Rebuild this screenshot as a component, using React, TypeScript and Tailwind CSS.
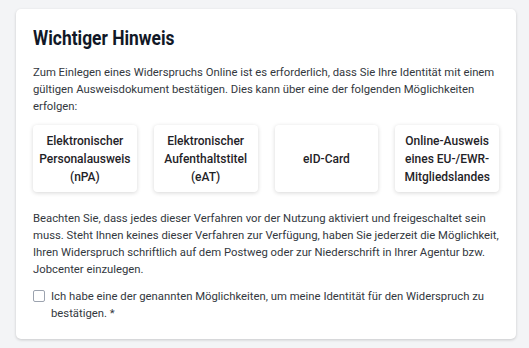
import React from "react";

const options = [
  ["Elektronischer", "Personalausweis", "(nPA)"],
  ["Elektronischer", "Aufenthaltstitel", "(eAT)"],
  ["eID-Card"],
  ["Online-Ausweis", "eines EU-/EWR-", "Mitgliedslandes"],
];

export default function App() {
  return (
    <div
      className="w-[529px] h-[348px] bg-[#f3f4f6] pt-[9px] pl-[16px] overflow-hidden"
      style={{ fontFamily: "Roboto, 'Liberation Sans', sans-serif" }}
    >
      <div className="w-[500px] bg-white rounded-[5px] shadow-[0_1px_3px_rgba(0,0,0,0.18)] p-[17px]">
        <h1 className="text-[20px] leading-[24px] font-bold text-[#111827] inline-block origin-left scale-x-[0.87] whitespace-nowrap">
          Wichtiger Hinweis
        </h1>
        <p className="mt-[12px] text-[11.3px] leading-[17px] text-[#333840] whitespace-nowrap">
          Zum Einlegen eines Widerspruchs Online ist es erforderlich, dass Sie Ihre Identität mit einem
          <br />
          gültigen Ausweisdokument bestätigen. Dies kann über eine der folgenden Möglichkeiten
          <br />
          erfolgen:
        </p>
        <div className="mt-[10px] grid grid-cols-4 gap-[17px]">
          {options.map((lines, i) => (
            <div
              key={i}
              className="h-[67px] rounded-[4px] bg-white shadow-[0_1px_4px_rgba(0,0,0,0.16)] flex flex-col items-center justify-center text-center text-[12px] leading-[18px] font-medium text-[#1f2328]"
            >
              {lines.map((l, j) => (
                <span key={j}>{l}</span>
              ))}
            </div>
          ))}
        </div>
        <p className="mt-[18px] text-[11.3px] leading-[17px] text-[#333840] whitespace-nowrap">
          Beachten Sie, dass jedes dieser Verfahren vor der Nutzung aktiviert und freigeschaltet sein
          <br />
          muss. Steht Ihnen keines dieser Verfahren zur Verfügung, haben Sie jederzeit die Möglichkeit,
          <br />
          Ihren Widerspruch schriftlich auf dem Postweg oder zur Niederschrift in Ihrer Agentur bzw.
          <br />
          Jobcenter einzulegen.
        </p>
        <label className="mt-[10px] flex items-start gap-[6px] text-[11.3px] leading-[17px] text-[#333840] whitespace-nowrap">
          <span className="mt-[2px] w-[12px] h-[12px] shrink-0 rounded-[2px] border border-[#9ca3af] bg-white" />
          <span>
            Ich habe eine der genannten Möglichkeiten, um meine Identität für den Widerspruch zu
            <br />
            bestätigen. *
          </span>
        </label>
      </div>
    </div>
  );
}
